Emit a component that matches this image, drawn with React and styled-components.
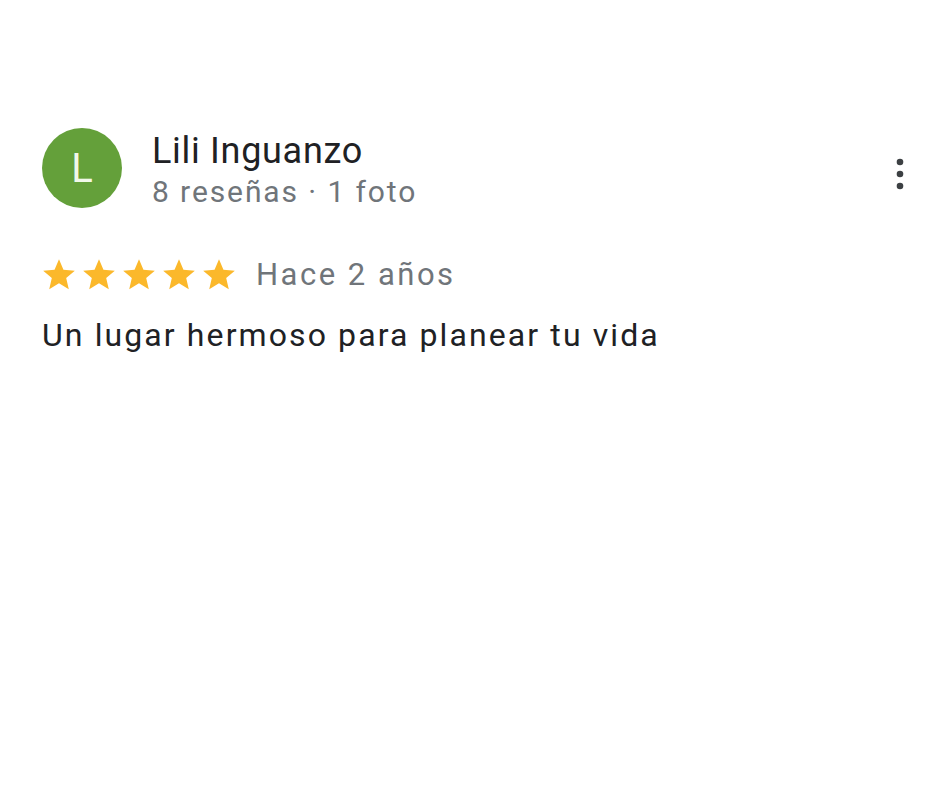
import React from "react";
import styled, { createGlobalStyle } from "styled-components";

const Global = createGlobalStyle`
  html, body {
    margin: 0;
    background: #ffffff;
  }
  body {
    font-family: Roboto, "Liberation Sans", Arial, sans-serif;
    -webkit-font-smoothing: antialiased;
  }
`;

const Card = styled.div`
  width: 940px;
  height: 788px;
  box-sizing: border-box;
  padding: 128px 28px 0 42px;
`;

const Header = styled.div`
  display: flex;
  align-items: flex-start;
`;

const Avatar = styled.div`
  width: 80px;
  height: 80px;
  border-radius: 50%;
  background: #64a03a;
  color: #f1f8ea;
  display: flex;
  align-items: center;
  justify-content: center;
  font-size: 40px;
  flex-shrink: 0;
`;

const Who = styled.div`
  margin: 3px 0 0 30px;
  flex: 1;
  display: flex;
  flex-direction: column;
`;

const Name = styled.div`
  font-size: 36px;
  line-height: 40px;
  letter-spacing: 0.7px;
  color: #202124;
`;

const Meta = styled.div`
  font-size: 30px;
  line-height: 41px;
  letter-spacing: 1.9px;
  color: #70757a;
`;

const MoreButton = styled.button`
  border: 0;
  background: none;
  padding: 0;
  width: 24px;
  height: 40px;
  margin-top: 26px;
  display: flex;
  align-items: center;
  justify-content: center;
  color: #3c4043;
`;

const RatingRow = styled.div`
  display: flex;
  align-items: center;
  height: 40px;
  margin-top: 43px;
`;

const Stars = styled.div`
  display: flex;
  gap: 2px;
  margin-left: -2px;
`;

const When = styled.span`
  margin-left: 18px;
  font-size: 31px;
  line-height: 40px;
  letter-spacing: 2.5px;
  color: #70757a;
`;

const Text = styled.p`
  margin: 20px 0 0;
  font-size: 32px;
  line-height: 40px;
  letter-spacing: 2.1px;
  color: #202124;
`;

function Star() {
  return (
    <svg width="38" height="38" viewBox="0 0 24 24">
      <path
        fill="#fbb82b"
        d="M12 17.27L18.18 21l-1.64-7.03L22 9.24l-7.19-.61L12 2 9.19 8.63 2 9.24l5.46 4.73L5.82 21z"
      />
    </svg>
  );
}

export default function App() {
  return (
    <>
      <Global />
      <Card>
        <Header>
          <Avatar>L</Avatar>
          <Who>
            <Name>Lili Inguanzo</Name>
            <Meta>8 reseñas · 1 foto</Meta>
          </Who>
          <MoreButton aria-label="Más opciones">
            <svg width="10" height="34" viewBox="0 0 10 34">
              <circle cx="5" cy="5" r="3.3" fill="currentColor" />
              <circle cx="5" cy="17" r="3.3" fill="currentColor" />
              <circle cx="5" cy="29" r="3.3" fill="currentColor" />
            </svg>
          </MoreButton>
        </Header>
        <RatingRow>
          <Stars>
            {[0, 1, 2, 3, 4].map((i) => (
              <Star key={i} />
            ))}
          </Stars>
          <When>Hace 2 años</When>
        </RatingRow>
        <Text>Un lugar hermoso para planear tu vida</Text>
      </Card>
    </>
  );
}
